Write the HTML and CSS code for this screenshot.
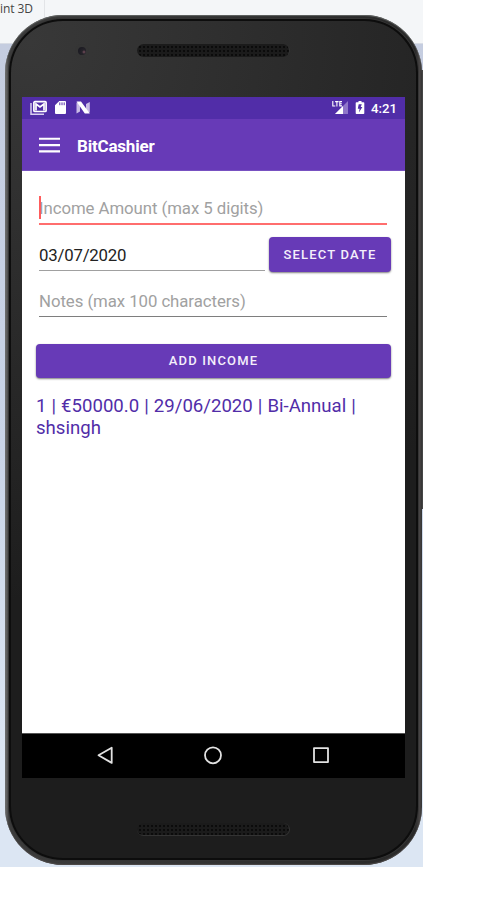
FILE: index.html
```
<!DOCTYPE html>
<html lang="en">
<head>
<meta charset="utf-8">
<title>BitCashier</title>
<link rel="stylesheet" href="styles.css">
</head>
<body>
<div class="desktop">
  <div class="tab">int 3D</div>
  <div class="side-key"></div>
  <div class="phone">
    <div class="face">
      <header class="phone-top">
        <span class="camera"></span>
        <span class="speaker"></span>
      </header>
      <main class="screen">
        <div class="status">
          <svg class="status-left" width="62" height="16" viewBox="0 0 62 16">
            <path d="M1 3v11.200h13" fill="none" stroke="#d9cff0" stroke-width="1.5"/>
            <rect x="3.900" y="1.700" width="12.200" height="9.800" rx="1" fill="none" stroke="#fff" stroke-width="1.700"/>
            <path d="M6 10.500V4l4 3 4-3v6.500" fill="none" stroke="#fff" stroke-width="1.700"/>
            <path d="M29.300 1H35q1 0 1 1v11q0 1-1 1H26q-1 0-1-1V5.300z" fill="#fff"/>
            <path d="M29.800 2.400v2.800M32 2.400v2.800M34.200 2.400v2.800" stroke="#5933aa" stroke-width="1"/>
            <path d="M46.500 2.500h3.500v9l-3.500 2zM56 4l3.800-2v10.500h-3.800z" fill="#c9bbe6"/>
            <path d="M46.500 1.500h4.500l8.800 12h-5z" fill="#fff"/>
          </svg>
          <div class="status-right">
            <svg width="34" height="16" viewBox="0 0 34 16">
              <path d="M16 1v13H3z" fill="#8f76c9"/>
              <path d="M11 6v8H3z" fill="#fff"/>
              <path d="M.8 1v5h2.500M3.100 1.600h3.500M4.900 1.600v5M10 1.600H7.800v4.300H10M7.800 3.700h2" fill="none" stroke="#fff" stroke-width="1.100"/>
              <path d="M26.500 1h3v1.200h2q.8 0 .8.8v10.300q0 .8-.8.8h-7q-.8 0-.8-.8V3q0-.8.8-.8h2z" fill="#fff"/>
              <path d="M26.700 4.200h3.100l-1.100 2.900h1.700l-3.500 5.500.7-3.900h-1.800z" fill="#512da8"/>
            </svg>
            <span class="clock">4:21</span>
          </div>
        </div>
        <div class="toolbar">
          <svg class="menu" width="21" height="16" viewBox="0 0 21 16"><path d="M0 1.700h21M0 8.100h21M0 14.400h21"/></svg>
          <h1 class="title">BitCashier</h1>
        </div>
        <section class="content">
          <div class="field field-amount"><span class="caret"></span>Income Amount (max 5 digits)</div>
          <div class="date-row">
            <div class="field field-date">03/07/2020</div>
            <button class="button select">SELECT DATE</button>
          </div>
          <div class="field field-notes">Notes (max 100 characters)</div>
          <button class="button add">ADD INCOME</button>
          <p class="entry">1 | €50000.0 | 29/06/2020 | Bi-Annual | shsingh</p>
        </section>
        <nav class="nav">
          <svg width="20" height="20" viewBox="0 0 20 20"><path d="M3.500 10.300L16.700 2.700v15.200z"/></svg>
          <svg width="20" height="20" viewBox="0 0 20 20"><circle cx="10" cy="10.300" r="8"/></svg>
          <svg width="20" height="20" viewBox="0 0 20 20"><rect x="3" y="3.100" width="14" height="14"/></svg>
        </nav>
      </main>
      <footer class="phone-bottom"><span class="speaker"></span></footer>
    </div>
  </div>
</div>
</body>
</html>
```
FILE: styles.css
```
* { box-sizing: border-box; }
body { margin: 0; background: #fff; font-family: Roboto, sans-serif; }
.desktop {
  position: relative;
  width: 423px;
  height: 867px;
  padding: 15px 0 0 5px;
  overflow: hidden;
  background: linear-gradient(#f4f6f8 43px, #d9dde5 43px, #d9dde5 44px, #c5cde0 44px, #c9d4e7 450px, #dce6f3 760px);
}
.tab {
  position: absolute;
  left: 0;
  top: 0;
  width: 45px;
  height: 44px;
  border-right: 1px solid #e2e4e7;
  font: 12px/17px "Open Sans", sans-serif;
  letter-spacing: -0.1px;
  color: #444;
}
.side-key {
  position: absolute;
  right: 0;
  top: 70px;
  width: 2px;
  height: 439px;
  background: #454545;
}
.phone {
  position: relative;
  width: 417px;
  height: 850px;
  padding: 4px 4px 5px;
  border-radius: 58px;
  background: linear-gradient(90deg, #777 0, #3c3c3c 4px, #292929 410px, #4a4747 415px, #292828);
  box-shadow: inset 0 1px 1px #626564, inset 0 -1px 1px #4e4a49;
}
.face {
  height: 841px;
  border: 2px solid #0d0d0d;
  border-radius: 54px;
  background: radial-gradient(circle at 20px 20px, #383838, #282828 330px, #1d1d1d 560px);
  box-shadow: 0 0 0 1px #353535;
}
.phone-top { display: flex; align-items: center; height: 76px; padding: 0 0 17px 64px; }
.camera {
  width: 14px;
  height: 14px;
  margin-right: 48px;
  border: 3px solid #353535;
  border-radius: 50%;
  background: radial-gradient(circle at 6px 5px, #79505e 0, #26232a 2px, #1d1c23 5px);
}
.speaker {
  width: 153px;
  height: 13px;
  border-radius: 7px;
  border-right: 1px solid #333;
  background: radial-gradient(circle, #0b0b0b 0.7px, #1b1b1b 1.4px) 1px 1px / 4px 4px;
}
.phone-bottom { display: flex; padding: 45px 0 0 126px; }
.phone-bottom .speaker { border-bottom: 1px solid #333; }
.screen {
  display: flex;
  flex-direction: column;
  width: 383px;
  height: 681px;
  margin-left: 11px;
  background: #fff;
}
.status {
  display: flex;
  justify-content: space-between;
  height: 22px;
  padding: 3px 8px 0;
  background: #512da8;
}
.status-right { display: flex; gap: 5px; }
.clock { font-size: 13.2px; line-height: 17px; font-weight: 500; color: #fff; }
.toolbar {
  display: flex;
  align-items: center;
  gap: 17px;
  height: 52px;
  padding: 1px 17px 0;
  border-bottom: 1px solid #7851c1;
  background: #673ab7;
}
.menu { fill: none; stroke: #fff; stroke-width: 2.1; }
.title { margin: 0; padding-top: 1px; color: #fff; font-size: 17px; line-height: 22px; font-weight: 700; letter-spacing: -0.2px; }
.content { flex: 1; padding: 18px 14px 0; }
.field {
  position: relative;
  height: 36px;
  margin: 0 4px 0 3px;
  border-bottom: 1px solid #7e7e7e;
  font-size: 16.8px;
  line-height: 38px;
  letter-spacing: -0.06px;
  white-space: nowrap;
  color: #a1a1a1;
}
.field-amount { border-bottom: 2px solid #ff6e6e; }
.caret { position: absolute; left: 0; top: 7px; width: 2px; height: 23px; background: #ff5c5c; }
.date-row { display: flex; gap: 4px; margin-top: 12px; }
.field-date { flex: 1; height: 34px; margin: 0 0 0 3px; line-height: 36px; letter-spacing: -0.2px; color: #222; border-color: #a0a0a0; }
.field-notes { height: 34px; margin-top: 11px; line-height: 36px; }
.button {
  display: block;
  padding: 0;
  border: 0;
  border-radius: 4px;
  background: #673ab7;
  box-shadow: 0 1px 2px rgba(0, 0, 0, .5);
  color: #f4effb;
  font: 500 13px/36px Roboto, sans-serif;
  letter-spacing: 1.16px;
}
.select { width: 122px; height: 35px; }
.add { width: 355px; height: 34px; margin-top: 27px; line-height: 34px; }
.entry { margin: 17px 0 0; color: #512da8; font-size: 18.6px; line-height: 22px; word-spacing: 0.45px; }
.nav {
  display: flex;
  justify-content: center;
  gap: 88px;
  height: 45px;
  padding: 11px 2px 0 0;
  border-top: 1px solid #555;
  background: #000;
}
.nav svg { fill: none; stroke: #e2e2e2; stroke-width: 1.8; stroke-linejoin: round; }
```
